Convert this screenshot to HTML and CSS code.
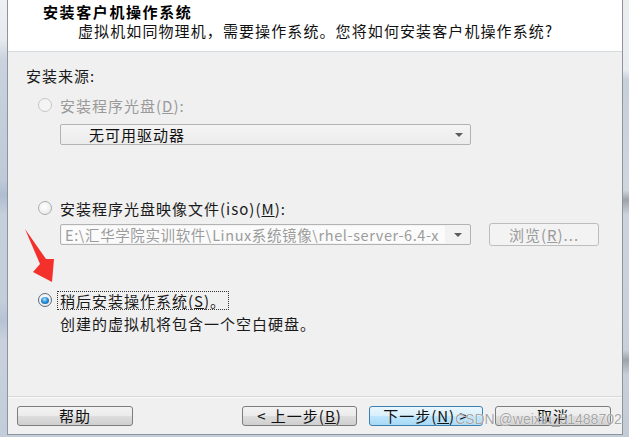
FILE: index.html
```html
<!DOCTYPE html>
<html lang="zh">
<head>
<meta charset="utf-8">
<title>安装客户机操作系统</title>
<link rel="stylesheet" href="styles.css">
</head>
<body>
<div class="screen">
  <div class="edge edge-left"></div>
  <div class="window">
    <div class="header">
      <div class="title">安装客户机操作系统</div>
      <div class="subtitle">虚拟机如同物理机，需要操作系统。您将如何安装客户机操作系统?</div>
    </div>
    <div class="content">
      <div class="label">安装来源:</div>
      <div class="radio-row r1 disabled">
        <span class="radio"></span>
        <span class="rtext">安装程序光盘(<u>D</u>):</span>
      </div>
      <div class="combo combo1">
        <span class="combo-text">无可用驱动器</span>
        <span class="arrow"></span>
      </div>
      <div class="radio-row r2">
        <span class="radio"></span>
        <span class="rtext">安装程序光盘映像文件(iso)(<u>M</u>):</span>
      </div>
      <div class="iso-row">
        <div class="combo combo2">
          <span class="combo-edit">E:\汇华学院实训软件\Linux系统镜像\rhel-server-6.4-x</span>
          <span class="arrow"></span>
        </div>
        <div class="btn browse">浏览(<u>R</u>)...</div>
      </div>
      <div class="radio-row r3">
        <span class="radio checked"><span class="dot"></span></span>
        <span class="rtext focus">稍后安装操作系统(<u>S</u>)。</span>
      </div>
      <div class="desc">创建的虚拟机将包含一个空白硬盘。</div>
    </div>
    <div class="footer">
      <div class="btn help">帮助</div>
      <div class="spacer"></div>
      <div class="btn prev">&lt; 上一步(<u>B</u>)</div>
      <div class="btn next">下一步(<u>N</u>) &gt;</div>
      <div class="btn cancel">取消</div>
    </div>
  </div>
  <div class="edge edge-right"></div>
</div>
<svg class="red-arrow" width="70" height="70" viewBox="0 0 70 70">
  <polygon points="25,14 46,44 54,44 52,67 33,57 40,49" fill="#f4302d"/>
</svg>
<div class="watermark">CSDN @weixin_51488702</div>
</body>
</html>
```

FILE: styles.css
```css
html, body {
  margin: 0;
  padding: 0;
}
body {
  width: 629px;
  height: 437px;
  overflow: hidden;
  background: #c3ccd9;
  font-family: "Noto Sans CJK SC", "Noto Sans", sans-serif;
  font-size: 15px;
  color: #1a1a1a;
  position: relative;
}
.screen {
  display: flex;
  height: 437px;
}
.edge {
  height: 437px;
}
.edge-left {
  width: 7px;
  background: linear-gradient(180deg, #eef0f3 0px, #e6e9ee 40px, #c9d2de 60px, #bfc9d8 180px, #aebdd2 195px, #c6cfdc 215px, #c4cedb 300px, #b6c3d5 320px, #c8d1dd 340px, #c3ccda 437px);
}
.edge-right {
  flex: 1;
  background: linear-gradient(180deg, #ecedef 0px, #e9ebee 70px, #c7cfdb 80px, #d0d6de 190px, #9ea3a9 200px, #cdd3dc 215px, #c9d0da 350px, #9fa4ab 360px, #c8cfd9 375px, #c3cbd7 437px);
}
.window {
  width: 614px;
  height: 434px;
  background: #f0f0f0;
  border-left: 1px solid #8e949b;
  border-right: 1px solid #8e949b;
  border-bottom: 1px solid #8e949b;
  display: flex;
  flex-direction: column;
}
.header {
  height: 52px;
  background: #ffffff;
  border-bottom: 1px solid #d6dbe0;
  box-sizing: border-box;
  padding-top: 2px;
  flex: none;
}
.title {
  padding-left: 35px;
  font-weight: bold;
  line-height: 20px;
  letter-spacing: 1.6px;
  color: #000;
}
.subtitle {
  padding-left: 70px;
  line-height: 18px;
  letter-spacing: 1.1px;
  color: #111;
}
.content {
  flex: 1;
  padding-left: 18px;
  display: flex;
  flex-direction: column;
  align-items: flex-start;
}
.label {
  margin-top: 14px;
  line-height: 20px;
  letter-spacing: 1px;
}
.radio-row {
  margin-left: 12px;
  display: flex;
  align-items: center;
  gap: 8px;
  height: 20px;
  letter-spacing: 1px;
}
.r1 { margin-top: 9px; }
.r2 { margin-top: 53px; }
.r3 { margin-top: 44px; gap: 6px; }
.disabled .rtext { color: #9a9a9a; }
.radio {
  width: 14px;
  height: 14px;
  border-radius: 50%;
  border: 1px solid #a9adb3;
  background: radial-gradient(circle at 45% 40%, #ffffff 0%, #f1f1f1 55%, #dcdcdc 100%);
  box-sizing: border-box;
  flex: none;
  display: flex;
  align-items: center;
  justify-content: center;
}
.disabled .radio {
  border-color: #c4c6c9;
  background: #f4f4f4;
}
.radio.checked {
  border-color: #5f6a77;
}
.dot {
  width: 8px;
  height: 7px;
  border-radius: 50%;
  background: radial-gradient(circle at 45% 35%, #b9e6ff 0%, #2a8fd8 45%, #0b4e8e 100%);
}
.focus {
  outline: 1px dotted #333;
  padding: 0 2px;
  line-height: 17px;
}
.desc {
  margin-top: 4px;
  margin-left: 34px;
  line-height: 20px;
  letter-spacing: 1px;
}
.combo {
  height: 21px;
  box-sizing: border-box;
  border: 1px solid #b3b3b3;
  border-radius: 2px;
  display: flex;
  align-items: center;
  position: relative;
}
.combo1 {
  margin-top: 9px;
  margin-left: 34px;
  width: 411px;
  background: linear-gradient(180deg, #f4f4f4, #ececec);
  letter-spacing: 1px;
}
.combo-text {
  padding-left: 28px;
  flex: 1;
  color: #111;
}
.arrow {
  width: 0;
  height: 0;
  border-left: 4px solid transparent;
  border-right: 4px solid transparent;
  border-top: 4px solid #5c5c5c;
  margin-right: 7px;
  margin-left: 6px;
  flex: none;
}
.iso-row {
  margin-top: 5px;
  margin-left: 34px;
  display: flex;
  align-items: center;
  gap: 18px;
}
.combo2 {
  width: 411px;
  background: #f2f2f2;
}
.combo-edit {
  margin-left: 1px;
  padding-left: 3px;
  width: 383px;
  box-sizing: border-box;
  background: #fbfbfb;
  color: #9b9b9b;
  font-size: 14.5px;
  line-height: 17px;
  white-space: nowrap;
  overflow: hidden;
  letter-spacing: 0.6px;
}
.combo2 .arrow { margin-left: 9px; }
.btn {
  height: 20px;
  box-sizing: border-box;
  border: 1px solid #7d7d7d;
  border-radius: 3px;
  background: linear-gradient(180deg, #f3f3f3 0%, #ebebeb 48%, #dddddd 52%, #cfcfcf 100%);
  display: flex;
  align-items: center;
  justify-content: center;
  line-height: 18px;
  letter-spacing: 1px;
  color: #111;
  flex: none;
}
.browse {
  width: 110px;
  height: 23px;
  border-color: #bdbdbd;
  background: #f3f3f3;
  color: #9a9a9a;
}
.footer {
  flex: none;
  border-top: 1px solid #d8d8d8;
  box-shadow: inset 0 1px 0 #fafafa;
  padding: 9px 11px 8px 9px;
  display: flex;
  gap: 12px;
}
.spacer { flex: 1; }
.help { width: 116px; }
.prev { width: 115px; }
.next {
  width: 114px;
  border-color: #3c7fb1;
  background: linear-gradient(180deg, #eaf6fd 0%, #d9f0fc 48%, #bee6fd 52%, #a7d9f5 100%);
}
.cancel { width: 116px; }
.red-arrow {
  position: absolute;
  left: 0;
  top: 215px;
}
.watermark {
  position: absolute;
  left: 455px;
  top: 411px;
  font-family: "Liberation Sans", Arial, sans-serif;
  font-size: 14px;
  line-height: 16px;
  color: rgba(110, 110, 110, 0.65);
  text-shadow: 0 0 1px #ffffff, 0 0 1px #ffffff;
  white-space: nowrap;
}
```
